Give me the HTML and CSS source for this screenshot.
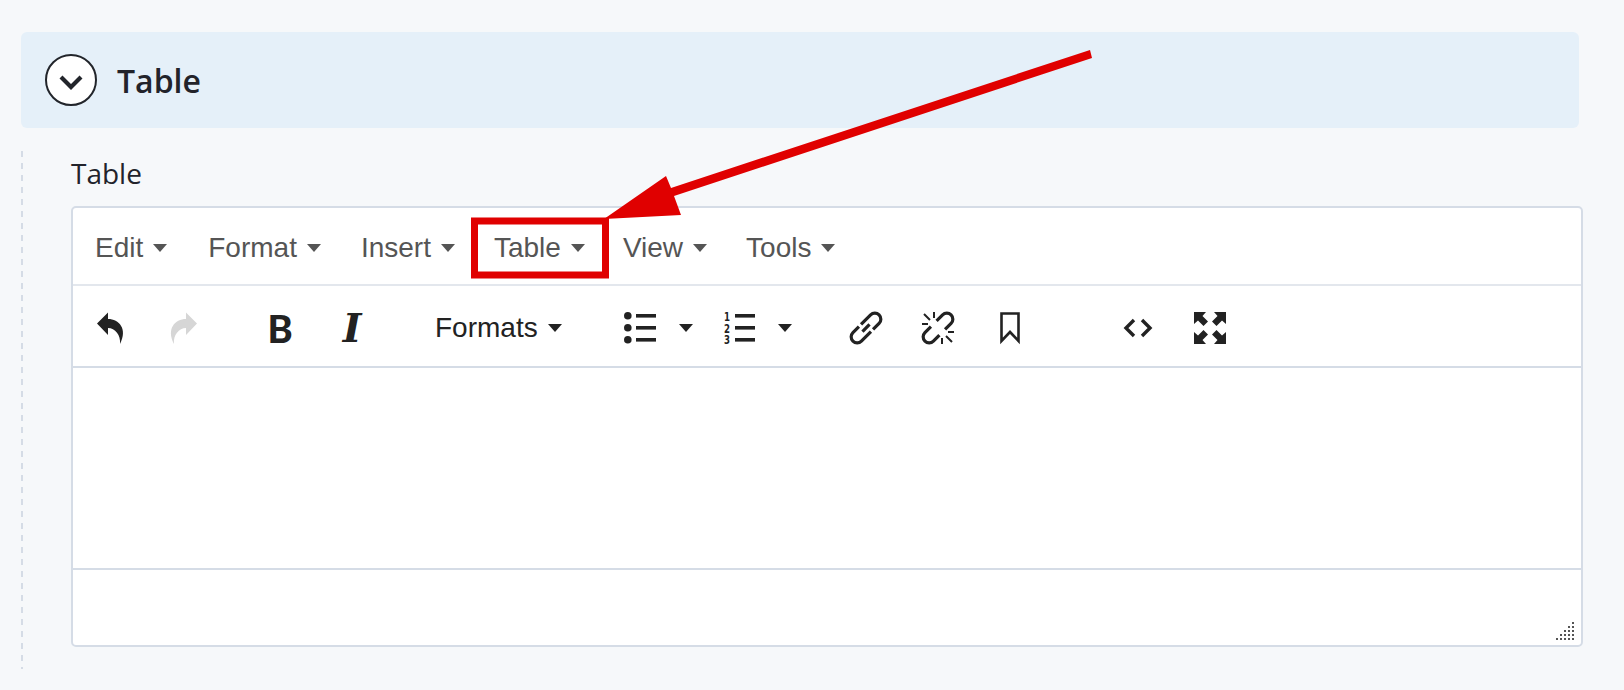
FILE: index.html
```html
<!DOCTYPE html>
<html lang="en">
<head>
<meta charset="utf-8">
<title>Table</title>
<link rel="stylesheet" href="styles.css">
</head>
<body>
<main class="page">
  <header class="panel-head">
    <span class="toggle">
      <svg width="24" height="16" viewBox="0 0 24 16"><path d="M2 3 L12 13 L22 3" fill="none" stroke="#22252b" stroke-width="4.2"/></svg>
    </span>
    <h1 class="panel-title">Table</h1>
  </header>
  <section class="panel-body">
    <div class="field-label">Table</div>
    <div class="editor">
      <nav class="menubar">
        <span class="menu-item menu-edit">Edit<i class="caret"></i></span>
        <span class="menu-item menu-format">Format<i class="caret"></i></span>
        <span class="menu-item menu-insert">Insert<i class="caret"></i></span>
        <span class="menu-item menu-table">Table<i class="caret"></i></span>
        <span class="menu-item menu-view">View<i class="caret"></i></span>
        <span class="menu-item menu-tools">Tools<i class="caret"></i></span>
      </nav>
      <div class="toolbar">
        <div class="group">
          <span class="tool"><svg class="icon" viewBox="0 0 32 32"><path d="M2 11.5 L13 0.5 V7 C24 7 33 17 25 32 C26 23 20 16 13 16 V23 Z"/></svg></span>
          <span class="tool"><svg class="icon muted" viewBox="0 0 32 32"><path d="M30 11.5 L19 0.5 V7 C8 7 -1 17 7 32 C6 23 12 16 19 16 V23 Z"/></svg></span>
        </div>
        <div class="group group-format">
          <span class="tool glyph-b">B</span>
          <span class="tool glyph-i">I</span>
        </div>
        <span class="formats">Formats<i class="caret caret-dark"></i></span>
        <div class="list-btn list-bullet">
          <svg class="icon" viewBox="0 0 32 32"><circle cx="3.8" cy="3.8" r="3.8"/><circle cx="3.8" cy="15.8" r="3.8"/><circle cx="3.8" cy="27.8" r="3.8"/><rect x="12" y="2" width="20" height="3.6"/><rect x="12" y="14" width="20" height="3.6"/><rect x="12" y="26" width="20" height="3.6"/></svg>
          <i class="caret caret-dark caret-list"></i>
        </div>
        <div class="list-btn list-number">
          <svg class="icon" viewBox="0 0 32 32"><text class="digit" x="0" y="8.5" textLength="6" lengthAdjust="spacingAndGlyphs">1</text><text class="digit" x="0" y="20.5" textLength="6" lengthAdjust="spacingAndGlyphs">2</text><text class="digit" x="0" y="32" textLength="6" lengthAdjust="spacingAndGlyphs">3</text><rect x="11" y="2" width="20" height="3.6"/><rect x="11" y="14" width="20" height="3.6"/><rect x="11" y="26" width="20" height="3.6"/></svg>
          <i class="caret caret-dark caret-list"></i>
        </div>
        <div class="group group-link">
          <span class="tool"><svg class="icon" viewBox="0 0 32 32"><g transform="rotate(-45 16 16)" fill="none" stroke="#222" stroke-width="3.2"><path d="M15 10 H28.5 A6 6 0 0 1 28.5 22 H20"/><path d="M17 22 H3.5 A6 6 0 0 1 3.5 10 H12"/><path d="M11 16 H21"/></g></svg></span>
          <span class="tool"><svg class="icon" viewBox="0 0 32 32"><g transform="rotate(-45 16 16)" fill="none" stroke="#222" stroke-width="3.2"><path d="M20 10 H28.5 A6 6 0 0 1 28.5 22 H20"/><path d="M12 22 H3.5 A6 6 0 0 1 3.5 10 H12"/></g><path d="M2 2 L8 8 M12 0 V6 M0 12 H6 M30 30 L24 24 M20 32 V26 M32 20 H26" fill="none" stroke="#222" stroke-width="2"/></svg></span>
          <span class="tool"><svg class="icon icon-mark" viewBox="0 0 20 32"><path d="M1.5 1.5 H18.5 V29 L10 20 L1.5 29 Z" fill="none" stroke="#222" stroke-width="2.6"/></svg></span>
        </div>
        <div class="group group-code">
          <span class="tool"><svg class="icon" viewBox="0 0 32 32"><path d="M12 8 L4 16 L12 24 M20 8 L28 16 L20 24" fill="none" stroke="#222" stroke-width="3.4"/></svg></span>
          <span class="tool"><svg class="icon" viewBox="0 0 32 32"><path d="M0 0 H12 L8.5 4 L14 9.5 L9.5 14 L4 8.5 L0 12 Z M32 0 H20 L23.5 4 L18 9.5 L22.5 14 L28 8.5 L32 12 Z M0 32 H12 L8.5 28 L14 22.5 L9.5 18 L4 23.5 L0 20 Z M32 32 H20 L23.5 28 L18 22.5 L22.5 18 L28 23.5 L32 20 Z"/></svg></span>
        </div>
      </div>
      <div class="content"></div>
      <div class="statusbar">
        <svg class="grip" width="18" height="18" viewBox="0 0 18 18"><path d="M16 0h2v2h-2z M16 4h2v2h-2z M12 4h2v2h-2z M16 8h2v2h-2z M12 8h2v2h-2z M8 8h2v2h-2z M16 12h2v2h-2z M12 12h2v2h-2z M8 12h2v2h-2z M4 12h2v2h-2z M16 16h2v2h-2z M12 16h2v2h-2z M8 16h2v2h-2z M4 16h2v2h-2z M0 16h2v2h-2z"/></svg>
      </div>
    </div>
  </section>
</main>
<svg class="callout" width="1624" height="690" viewBox="0 0 1624 690">
  <rect x="474.5" y="221" width="131" height="54" fill="none" stroke="#e00000" stroke-width="7"/>
  <path d="M1090 50 L1092 58 L674 196 L681 215 L604 219 L666 176 L671 188 Z" fill="#e00000"/>
</svg>
</body>
</html>
```
FILE: styles.css
```css
* { box-sizing: border-box; }
html, body { margin: 0; height: 690px; overflow: hidden; }
body { background: #f6f8fa; position: relative; font-family: "Open Sans", sans-serif; }
.page { padding: 32px 45px 0 21px; }

.panel-head {
  height: 96px;
  background: #e5f0f9;
  border-radius: 6px;
  display: flex;
  align-items: center;
  padding-left: 24px;
}
.toggle {
  width: 52px; height: 52px;
  border: 2px solid #22252b;
  border-radius: 50%;
  background: #fff;
  display: flex; align-items: center; justify-content: center;
  padding-top: 3px;
}
.panel-title {
  margin: 0 0 0 20px;
  font-size: 32px;
  font-weight: 600;
  color: #22232b;
}

.panel-body {
  margin-top: 23px;
  height: 518px;
  padding: 3px 0 0 50px;
  background: repeating-linear-gradient(#d5dce6 0 6px, transparent 6px 12px) left top / 2px 100% no-repeat;
}
.field-label {
  height: 38px;
  line-height: 38px;
  font-size: 28px;
  color: #22232b;
}
.editor {
  width: 1512px;
  height: 441px;
  margin-top: 14px;
  border: 2px solid #d5dce6;
  border-radius: 5px;
  background: #fff;
  display: flex;
  flex-direction: column;
}

.menubar {
  height: 78px;
  flex: none;
  border-bottom: 2px solid #e3e7ed;
  display: flex;
  align-items: center;
  padding: 3px 0 0 22px;
  font-family: "Liberation Sans", Arial, sans-serif;
  font-size: 28px;
  color: #555;
}
.menu-item { display: inline-flex; align-items: center; }
.menu-format { margin-left: 42px; }
.menu-insert { margin-left: 41px; }
.menu-table { margin-left: 40px; }
.menu-view { margin-left: 39px; }
.menu-tools { margin-left: 40px; }

.caret {
  width: 0; height: 0;
  margin: 0 -1px 0 10px;
  border-style: solid;
  border-width: 8px 7.5px 0;
  border-color: #555 transparent transparent;
}
.caret-dark { border-top-color: #222; }
.caret-list { margin: 0; }

.toolbar {
  height: 82px;
  flex: none;
  border-bottom: 2px solid #d5dce6;
  display: flex;
  align-items: center;
  padding: 4px 0 0 2px;
  color: #222;
}
.group { display: flex; align-items: center; }
.tool { width: 72px; height: 32px; display: flex; align-items: center; justify-content: center; }
.icon { width: 32px; height: 32px; fill: #222; display: block; overflow: visible; }
.icon.muted { fill: #d6d6d6; }
.icon.icon-mark { width: 20px; }
.digit { font-family: "DejaVu Sans", sans-serif; font-weight: 700; font-size: 12px; fill: #222; }

.group-format { margin-left: 25px; }
.glyph-b { font-family: "Lato", sans-serif; font-weight: 900; font-size: 38px; line-height: 32px; }
.glyph-i { font-family: "DejaVu Serif", serif; font-style: italic; font-weight: 700; font-size: 40px; line-height: 32px; }
.formats {
  margin-left: 47px;
  display: inline-flex;
  align-items: center;
  font-family: "Liberation Sans", Arial, sans-serif;
  font-size: 28px;
  color: #222;
}
.list-btn { display: flex; align-items: center; gap: 22px; }
.list-bullet { margin-left: 63px; gap: 23px; }
.list-number { margin-left: 31px; }
.group-link { margin-left: 38px; }
.group-code { margin-left: 56px; }

.content { flex: none; height: 202px; border-bottom: 2px solid #d5dce6; }
.statusbar { flex: 1; display: flex; justify-content: flex-end; align-items: flex-end; padding: 0 7px 5px 0; }
.grip { fill: #555; display: block; }

.callout { position: absolute; left: 0; top: 0; pointer-events: none; }
```
